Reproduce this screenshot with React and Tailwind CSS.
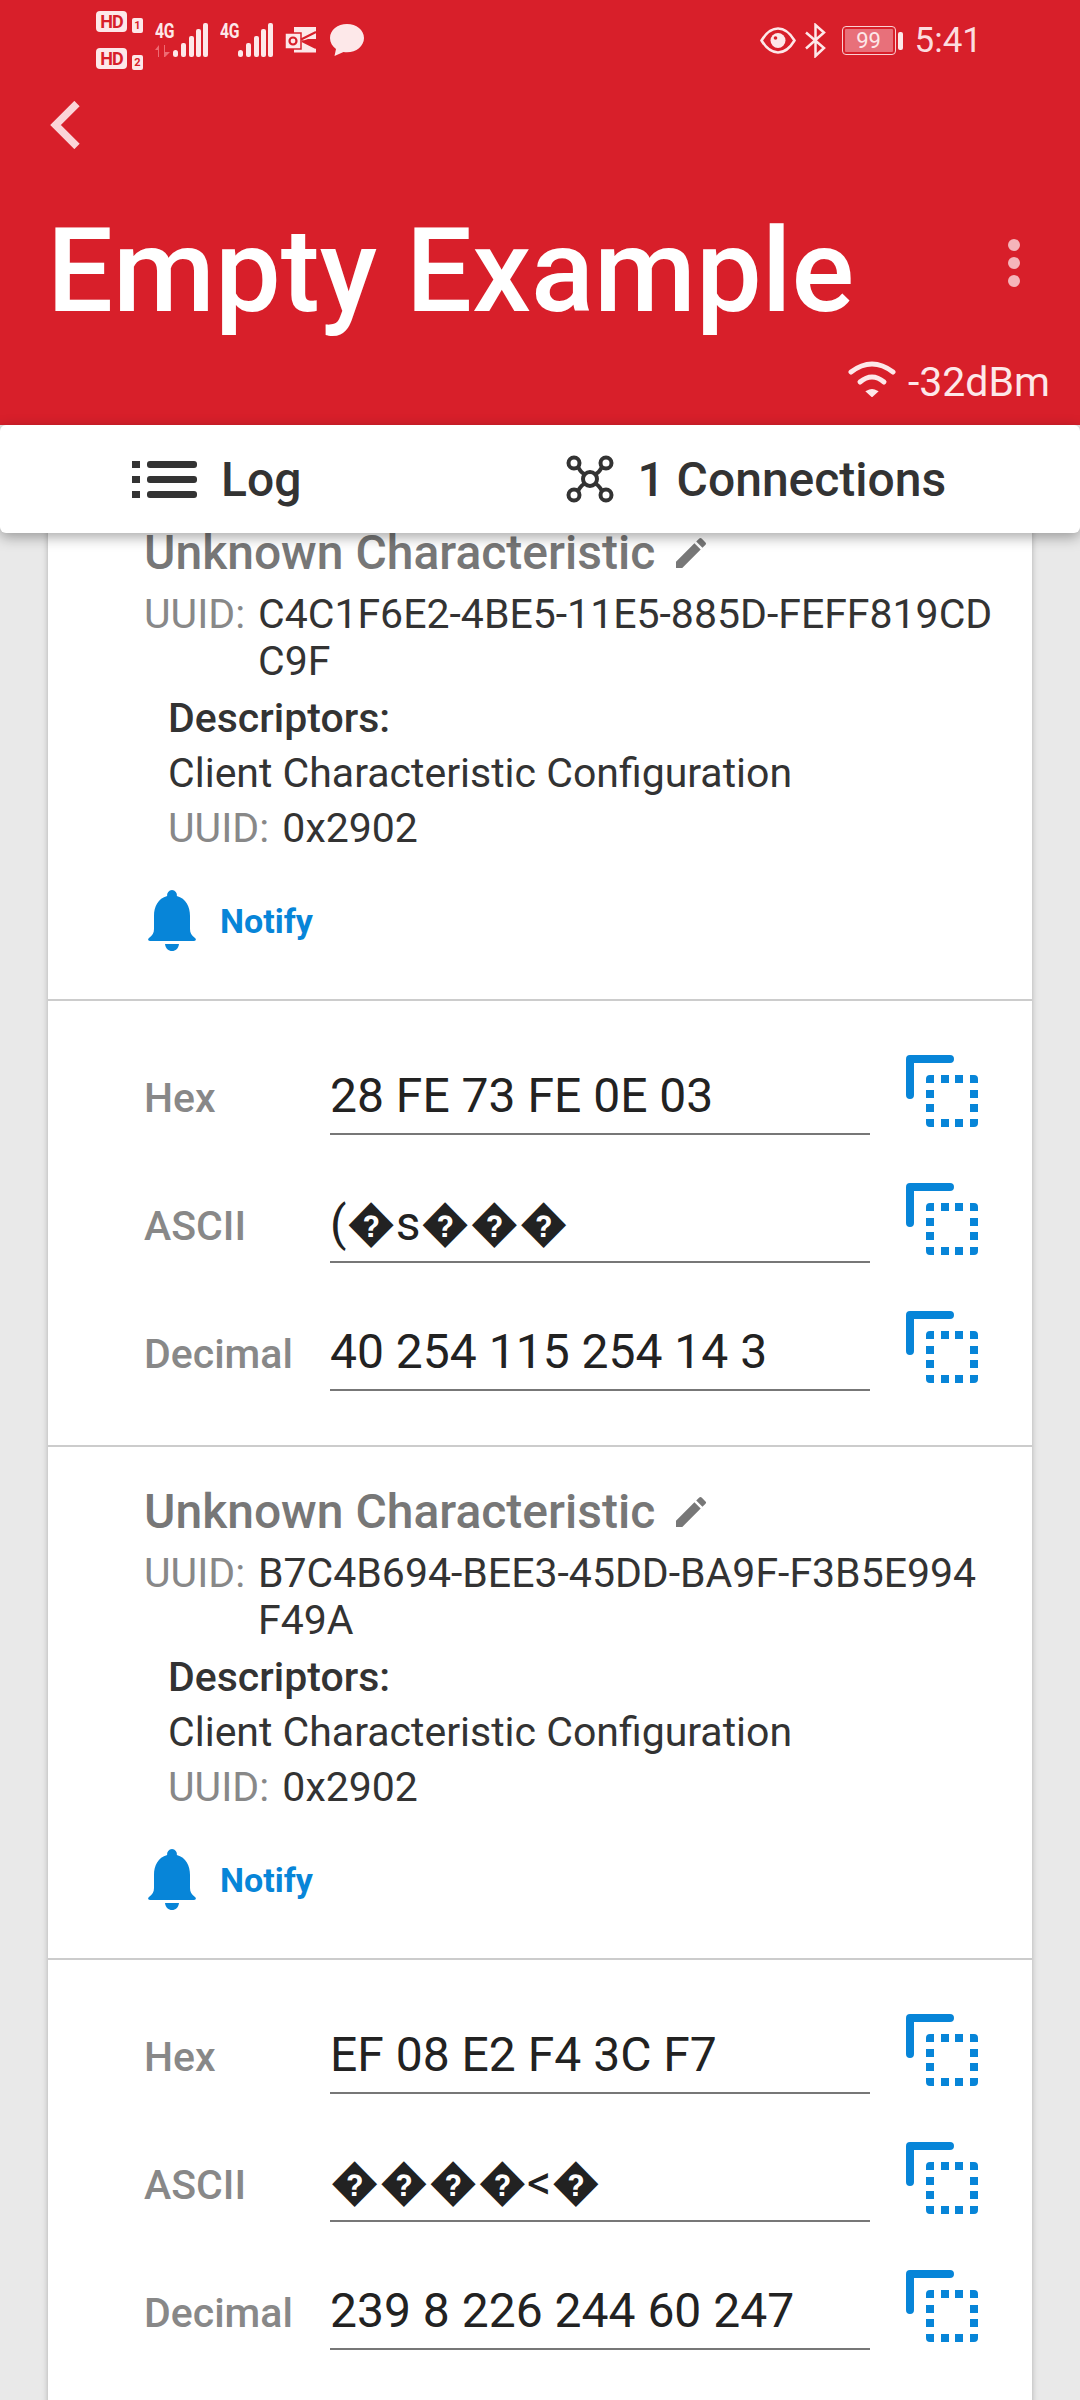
const F = { fontFamily: 'Roboto, "DejaVu Sans", sans-serif' };

function HD({ n }) {
  return (
    <div className="flex items-start gap-[5px] h-[22px]">
      <span className="flex items-center justify-center w-[31px] h-[21px] rounded-[4px] bg-[#fde8e9] text-[#d81f2a] text-[18px] leading-none font-bold tracking-[-1px]">HD</span>
      <span className="flex items-center justify-center w-[11px] h-[15px] mt-[7px] rounded-[2px] bg-[#fde8e9] text-[#d81f2a] text-[11px] leading-none font-bold">{n}</span>
    </div>
  );
}

function Signal({ arrows }) {
  return (
    <div className="flex items-start">
      <div className="flex flex-col w-[18px]">
        <span className="text-[#fde8e9] text-[21px] leading-[17px] font-bold tracking-[-0.5px] scale-x-[0.75] origin-left" style={F}>4G</span>
        {arrows && (
          <svg width="16" height="12" viewBox="0 0 16 12" className="mt-[5px]" fill="#ee6b73">
            <path d="M4 0v12H3V5H0zM9 0l1 0v7h5l-5 5H9z" />
          </svg>
        )}
      </div>
      <svg width="35" height="34" viewBox="0 0 35 34" fill="#fde8e9">
        <rect x="0" y="27" width="5" height="7" rx="2.5" />
        <rect x="8" y="20" width="5" height="14" rx="2" />
        <rect x="16" y="13" width="5" height="21" rx="2" />
        <rect x="23" y="6" width="5" height="28" rx="2" />
        <rect x="30" y="0" width="5" height="34" rx="2" />
      </svg>
    </div>
  );
}

function StatusBar() {
  return (
    <div className="h-[71px] flex items-start">
      <div className="ml-[96px] mt-[11px] flex flex-col gap-[15px]">
        <HD n="1" />
        <HD n="2" />
      </div>
      <div className="ml-[12px] mt-[23px]"><Signal arrows /></div>
      <div className="ml-[12px] mt-[23px]"><Signal /></div>
      <svg className="ml-[12px] mt-[27px]" width="33" height="27" viewBox="0 0 33 27" fill="#fde8e9">
        <path d="M9 0h22v12l-8 0-6 2 14 7v4.500H9z" />
        <rect x="0" y="6" width="16" height="16" fill="#fde8e9" stroke="#d81f2a" strokeWidth="1.500" />
        <circle cx="8" cy="14" r="3.500" fill="none" stroke="#d81f2a" strokeWidth="2.200" />
        <path d="M16 12.500 31 5M17 14l14 7" stroke="#d81f2a" strokeWidth="2" fill="none" />
      </svg>
      <svg className="ml-[12px] mt-[24px]" width="34" height="33" viewBox="0 0 34 33" fill="#fde8e9">
        <path d="M17 0C7.600 0 0 6 0 14c0 4.500 2.400 8.300 6 11l-1.500 7 9-4c1.100.2 2.300.3 3.500.3 9.400 0 17-6.300 17-14.300S26.400 0 17 0z" />
      </svg>
      <svg className="ml-auto mt-[27px]" width="36" height="27" viewBox="0 0 36 27" fill="none" stroke="#fde8e9" strokeWidth="2.500">
        <path d="M1.500 13.500C6 6 11 1.500 18 1.500S30 6 34.500 13.500C30 21 25 25.500 18 25.500S6 21 1.500 13.500z" />
        <circle cx="18" cy="13.500" r="7.500" fill="#fde8e9" stroke="none" />
        <circle cx="15.500" cy="11" r="1.800" fill="#d81f2a" stroke="none" />
      </svg>
      <svg className="ml-[9px] mt-[23px]" width="21" height="35" viewBox="0 0 21 35" fill="none" stroke="#fde8e9" strokeWidth="2.500">
        <path d="M1 9.500 19 25 10.500 33V2L19 9.500 1 25.500" />
      </svg>
      <div className="ml-[16px] mt-[26px] flex items-center">
        <div className="w-[54px] h-[29px] rounded-[4px] border border-[#fbd0d3] p-[2px] flex">
          <div className="flex-1 bg-[#e8707a] rounded-[1px] flex items-center justify-center text-[#fde8e9] text-[22px] leading-none" style={F}>99</div>
        </div>
        <div className="ml-[2px] w-[5px] h-[18px] rounded-[2px] bg-[#fde8e9]" />
      </div>
      <span className="ml-[12px] mr-[98px] mt-[22px] text-[35px] leading-[38px] text-[#fcdcdf]" style={F}>5:41</span>
    </div>
  );
}

function Header() {
  return (
    <div className="h-[425px] bg-[#d81f2a] flex flex-col shrink-0">
      <StatusBar />
      <div className="pl-[50px] mt-[30px] h-[48px]">
        <svg width="30" height="48" viewBox="0 0 30 48" fill="none" stroke="#fbd5d8" strokeWidth="7.500">
          <path d="M27 2.500 5.500 24 27 45.500" />
        </svg>
      </div>
      <div className="flex items-center mt-[60px] h-[124px]">
        <h1 className="ml-[47px] flex-1 text-[117px] leading-[124px] font-medium text-white" style={F}>Empty Example</h1>
        <div className="mr-[60px] flex flex-col gap-[6px] -mt-[16px]">
          <span className="w-[12px] h-[12px] rounded-full bg-[#f5b5ba]" />
          <span className="w-[12px] h-[12px] rounded-full bg-[#f5b5ba]" />
          <span className="w-[12px] h-[12px] rounded-full bg-[#f5b5ba]" />
        </div>
      </div>
      <div className="flex items-center justify-end pr-[30px] mt-[27px] gap-[12px]">
        <svg className="-mt-[6px]" width="48" height="36" viewBox="0 0 48 36" fill="none" stroke="#fde8e9" strokeWidth="5" strokeLinecap="round">
          <path d="M3 11Q24 -5 45 11" />
          <path d="M12 21Q24 11 36 21" />
          <path d="M19 30.500Q24 27.500 29 30.500L24 35Z" fill="#fde8e9" strokeWidth="2" />
        </svg>
        <span className="text-[41px] leading-[44px] text-[#fde8e9]" style={F}>-32dBm</span>
      </div>
    </div>
  );
}

function Tabs() {
  return (
    <div className="relative z-10 h-[108px] bg-white rounded-[6px] shadow-[0_4px_14px_rgba(0,0,0,0.35)] flex items-center shrink-0 text-[#333333]" style={F}>
      <div className="ml-[132px] flex items-center">
        <svg width="65" height="37" viewBox="0 0 65 37" fill="#333333">
          <rect x="0" y="0" width="8" height="7" />
          <rect x="0" y="15" width="8" height="7" />
          <rect x="0" y="30" width="8" height="7" />
          <rect x="15" y="0" width="50" height="7" rx="3" />
          <rect x="15" y="15" width="50" height="7" rx="3" />
          <rect x="15" y="30" width="50" height="7" rx="3" />
        </svg>
        <span className="ml-[24px] pt-[2px] text-[48px] leading-[54px] font-medium">Log</span>
      </div>
      <div className="ml-[265px] flex items-center">
        <svg width="48" height="48" viewBox="0 0 48 48" fill="none" stroke="#333333" strokeWidth="4">
          <circle cx="8" cy="8" r="5.500" />
          <circle cx="40" cy="8" r="5.500" />
          <circle cx="8" cy="40" r="5.500" />
          <circle cx="40" cy="40" r="5.500" />
          <circle cx="24" cy="24" r="7" />
          <path d="M12 12Q16 19 19 19M36 12Q32 19 29 19M12 36Q16 29 19 29M36 36Q32 29 29 29" />
        </svg>
        <span className="ml-[23px] pt-[2px] text-[48px] leading-[54px] font-medium">1 Connections</span>
      </div>
    </div>
  );
}

function Characteristic({ uuid }) {
  return (
    <div className="h-[513px] border-b-2 border-[#cccccc] pl-[96px] pt-[40px]">
      <div className="flex items-center h-[50px]">
        <span className="text-[48px] leading-[50px] font-medium text-[#777777]">Unknown Characteristic</span>
        <svg className="ml-[16px]" width="40" height="40" viewBox="0 0 24 24" fill="#777777">
          <path d="M3 17.250V21h3.750L17.810 9.940l-3.750-3.750zM20.710 7.040a1 1 0 0 0 0-1.410l-2.340-2.340a1 1 0 0 0-1.410 0l-1.830 1.830 3.750 3.750z" />
        </svg>
      </div>
      <div className="flex mt-[13px] text-[41px] leading-[47px]">
        <span className="w-[114px] shrink-0 text-[#888888]">UUID:</span>
        <span className="w-[740px] break-all text-[#333333]">{uuid}</span>
      </div>
      <div className="pl-[24px] mt-[6px] text-[41px] leading-[55px] text-[#333333]">
        <div className="font-medium">Descriptors:</div>
        <div>Client Characteristic Configuration</div>
        <div><span className="text-[#888888] mr-[3px]">UUID:</span> 0x2902</div>
      </div>
      <div className="flex items-center mt-[34px] h-[62px]">
        <svg className="ml-[4px]" width="48" height="62" viewBox="0 0 48 62" fill="#0785d8">
          <path d="M24 0a5 5 0 0 1 4.800 6C38 8.500 42 16.500 42 26v13c0 4 1.500 6 5 9 1.500 1.300 1 3-1 3H2c-2 0-2.500-1.700-1-3 3.500-3 5-5 5-9V26C6 16.500 10 8.500 19.200 6A5 5 0 0 1 24 0z" />
          <path d="M17 54h14c-.5 4.500-3.500 7-7 7s-6.500-2.500-7-7z" />
        </svg>
        <span className="ml-[24px] text-[34px] leading-[40px] font-bold text-[#0785d8]">Notify</span>
      </div>
    </div>
  );
}

function CopyIcon() {
  return (
    <svg width="72" height="72" viewBox="0 0 72 72" fill="#0785d8">
      <path d="M4 0h40a4 4 0 0 1 0 8H8v32a4 4 0 0 1-8 0V4a4 4 0 0 1 4-4z" />
      <path d="M24 20h4v8h-8v-4a4 4 0 0 1 4-4zM35 20h8v8h-8zM49 20h8v8h-8zM64 20h4a4 4 0 0 1 4 4v4h-8zM20 35h8v8h-8zM64 35h8v8h-8zM20 49h8v8h-8zM64 49h8v8h-8zM20 64h8v8h-4a4 4 0 0 1-4-4zM35 64h8v8h-8zM49 64h8v8h-8zM64 64h8v4a4 4 0 0 1-4 4h-4z" />
    </svg>
  );
}

function ValueRow({ label, value }) {
  return (
    <div className="flex h-[128px]">
      <span className="w-[186px] shrink-0 pt-[48px] text-[41px] leading-[46px] font-medium text-[#888888]">{label}</span>
      <div className="w-[540px] h-[108px] border-b-2 border-[#777777] pt-[42px] text-[48px] leading-[54px] text-[#222222] whitespace-nowrap">{value}</div>
      <div className="ml-[36px] mt-[28px]"><CopyIcon /></div>
    </div>
  );
}

function Values({ rows }) {
  return (
    <div className="h-[446px] border-b-2 border-[#cccccc] pl-[96px] pt-[26px]">
      {rows.map(([l, v]) => <ValueRow key={l} label={l} value={v} />)}
    </div>
  );
}

export default function App() {
  return (
    <div className="w-[1080px] h-[2400px] overflow-hidden flex flex-col bg-[#e9e9e9]" style={F}>
      <Header />
      <Tabs />
      <div className="flex-1 overflow-hidden">
        <div className="mx-[48px] -mt-[45px] bg-white shadow-[0_0_6px_rgba(0,0,0,0.25)]">
          <Characteristic uuid="C4C1F6E2-4BE5-11E5-885D-FEFF819CDC9F" />
          <Values rows={[["Hex", "28 FE 73 FE 0E 03"], ["ASCII", "(\uFFFDs\uFFFD\uFFFD\uFFFD"], ["Decimal", "40 254 115 254 14 3"]]} />
          <Characteristic uuid="B7C4B694-BEE3-45DD-BA9F-F3B5E994F49A" />
          <Values rows={[["Hex", "EF 08 E2 F4 3C F7"], ["ASCII", "\uFFFD\uFFFD\uFFFD\uFFFD<\uFFFD"], ["Decimal", "239 8 226 244 60 247"]]} />
        </div>
      </div>
    </div>
  );
}
